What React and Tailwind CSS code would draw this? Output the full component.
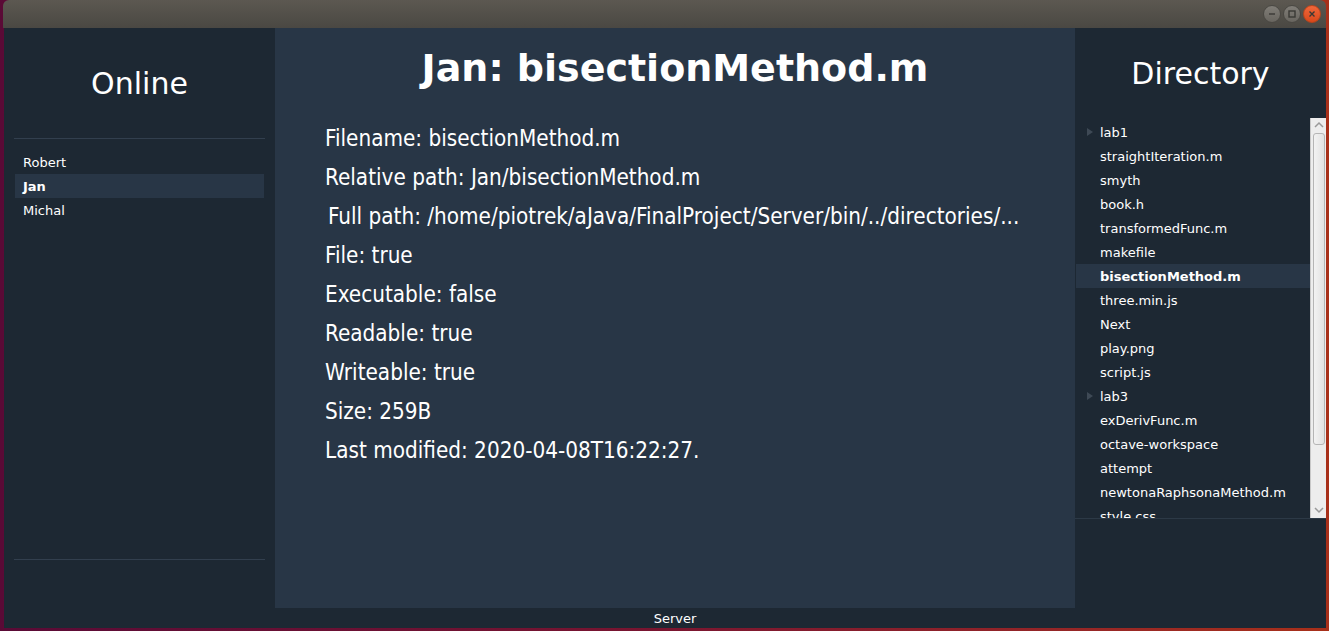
import React from "react";

const users = ["Robert", "Jan", "Michal"];

const files = [
  { name: "lab1", dir: true },
  { name: "straightIteration.m" },
  { name: "smyth" },
  { name: "book.h" },
  { name: "transformedFunc.m" },
  { name: "makefile" },
  { name: "bisectionMethod.m", selected: true },
  { name: "three.min.js" },
  { name: "Next" },
  { name: "play.png" },
  { name: "script.js" },
  { name: "lab3", dir: true },
  { name: "exDerivFunc.m" },
  { name: "octave-workspace" },
  { name: "attempt" },
  { name: "newtonaRaphsonaMethod.m" },
  { name: "style.css" },
];

const details = [
  "Filename: bisectionMethod.m",
  "Relative path: Jan/bisectionMethod.m",
  "Full path: /home/piotrek/aJava/FinalProject/Server/bin/../directories/...",
  "File: true",
  "Executable: false",
  "Readable: true",
  "Writeable: true",
  "Size: 259B",
  "Last modified: 2020-04-08T16:22:27.",
];

function WinButton({ kind }) {
  const close = kind === "close";
  return (
    <div
      className={`flex h-[18px] w-[18px] items-center justify-center rounded-full border ${
        close
          ? "border-[#b8441c] bg-gradient-to-b from-[#f0673a] to-[#d9481a]"
          : "border-[#4a4843] bg-gradient-to-b from-[#807d77] to-[#68655f]"
      }`}
    >
      <svg width="10" height="10" viewBox="0 0 10 10" fill="none" stroke="#3a3935" strokeWidth="1.4">
        {kind === "min" && <path d="M2 5h6" />}
        {kind === "max" && <rect x="2" y="2" width="6" height="6" />}
        {close && <path d="M2.5 2.5l5 5M7.5 2.5l-5 5" />}
      </svg>
    </div>
  );
}

export default function App() {
  return (
    <div className="h-[631px] w-[1329px] overflow-hidden bg-gradient-to-r from-[#5a0a36] via-[#7a1530] to-[#a8301a] pb-[3px] pl-[3px] pr-[3px] font-['DejaVu_Sans',sans-serif] text-white">
      <div className="flex h-full flex-col">
        {/* Title bar */}
        <div className="flex h-[28px] shrink-0 items-center justify-end gap-[2px] rounded-t-[6px] bg-gradient-to-b from-[#5c5851] to-[#4a4843] pr-[5px]">
          <WinButton kind="min" />
          <WinButton kind="max" />
          <WinButton kind="close" />
        </div>

        <div className="ml-[1px] flex flex-1 flex-col bg-[#1d2833]">
          <div className="flex h-[580px]">
            {/* Online */}
            <aside className="flex w-[271px] flex-col bg-[#1d2833]">
              <div className="flex h-[110px] items-center justify-center text-[30px]">Online</div>
              <div className="mx-[10px] h-px bg-[#323f4e]" />
              <ul className="mx-[11px] mt-[11px] text-[13px]">
                {users.map((u) => (
                  <li
                    key={u}
                    className={`flex h-[24px] items-center pl-[8px] pt-[2px] ${
                      u === "Jan" ? "bg-[#283646] font-bold" : ""
                    }`}
                  >
                    {u}
                  </li>
                ))}
              </ul>
              <div className="flex-1" />
              <div className="mx-[10px] mb-[48px] h-px bg-[#323f4e]" />
            </aside>

            {/* Details */}
            <main className="flex w-[800px] flex-col bg-[#283646]">
              <h1 className="flex h-[80px] items-center justify-center text-[38px] font-bold">
                Jan: bisectionMethod.m
              </h1>
              <div className="mt-[11px] pl-[50px] font-['DejaVu_Sans_Condensed','DejaVu_Sans',sans-serif] text-[22.3px]">
                {details.map((d, i) => (
                  <div key={d} className={`flex h-[39px] items-center ${i === 2 ? "pl-[3px]" : ""}`}>
                    {d}
                  </div>
                ))}
              </div>
            </main>

            {/* Directory */}
            <aside className="flex w-[251px] flex-col bg-[#1d2833]">
              <div className="flex h-[90px] items-center justify-center text-[30px]">Directory</div>
              <div className="flex h-[401px] border-b border-[#2c3946] pl-px">
                <ul className="flex-1 overflow-hidden pt-[2px] text-[13px]">
                  {files.map((f) => (
                    <li
                      key={f.name}
                      className={`relative flex h-[24px] items-center pl-[24px] pt-[2px] ${
                        f.selected ? "bg-[#283646] font-bold" : ""
                      }`}
                    >
                      {f.dir && (
                        <span className="absolute left-[11px] top-[8px] h-0 w-0 border-y-[4px] border-l-[6px] border-y-transparent border-l-[#3e4955]" />
                      )}
                      {f.name}
                    </li>
                  ))}
                </ul>
                <div className="flex w-[16px] flex-col items-center border-l border-[#c8c8c8] bg-[#ededed] pt-[3px]">
                  <svg width="10" height="8" viewBox="0 0 10 8" fill="none" stroke="#9a9a9a" strokeWidth="1.5">
                    <path d="M1 6l4-4 4 4" />
                  </svg>
                  <div className="mt-[4px] h-[312px] w-[12px] rounded-[3px] border border-[#b5b5b5] bg-gradient-to-r from-[#f2f2f2] to-[#e2e2e2]" />
                  <div className="flex-1" />
                  <svg className="mb-[4px]" width="10" height="8" viewBox="0 0 10 8" fill="none" stroke="#9a9a9a" strokeWidth="1.5">
                    <path d="M1 2l4 4 4-4" />
                  </svg>
                </div>
              </div>
            </aside>
          </div>

          {/* Status */}
          <div className="flex h-[20px] items-center pt-[2px] text-[13px]">
            <div className="w-[271px]" />
            <div className="w-[800px] text-center">Server</div>
          </div>
        </div>
      </div>
    </div>
  );
}
